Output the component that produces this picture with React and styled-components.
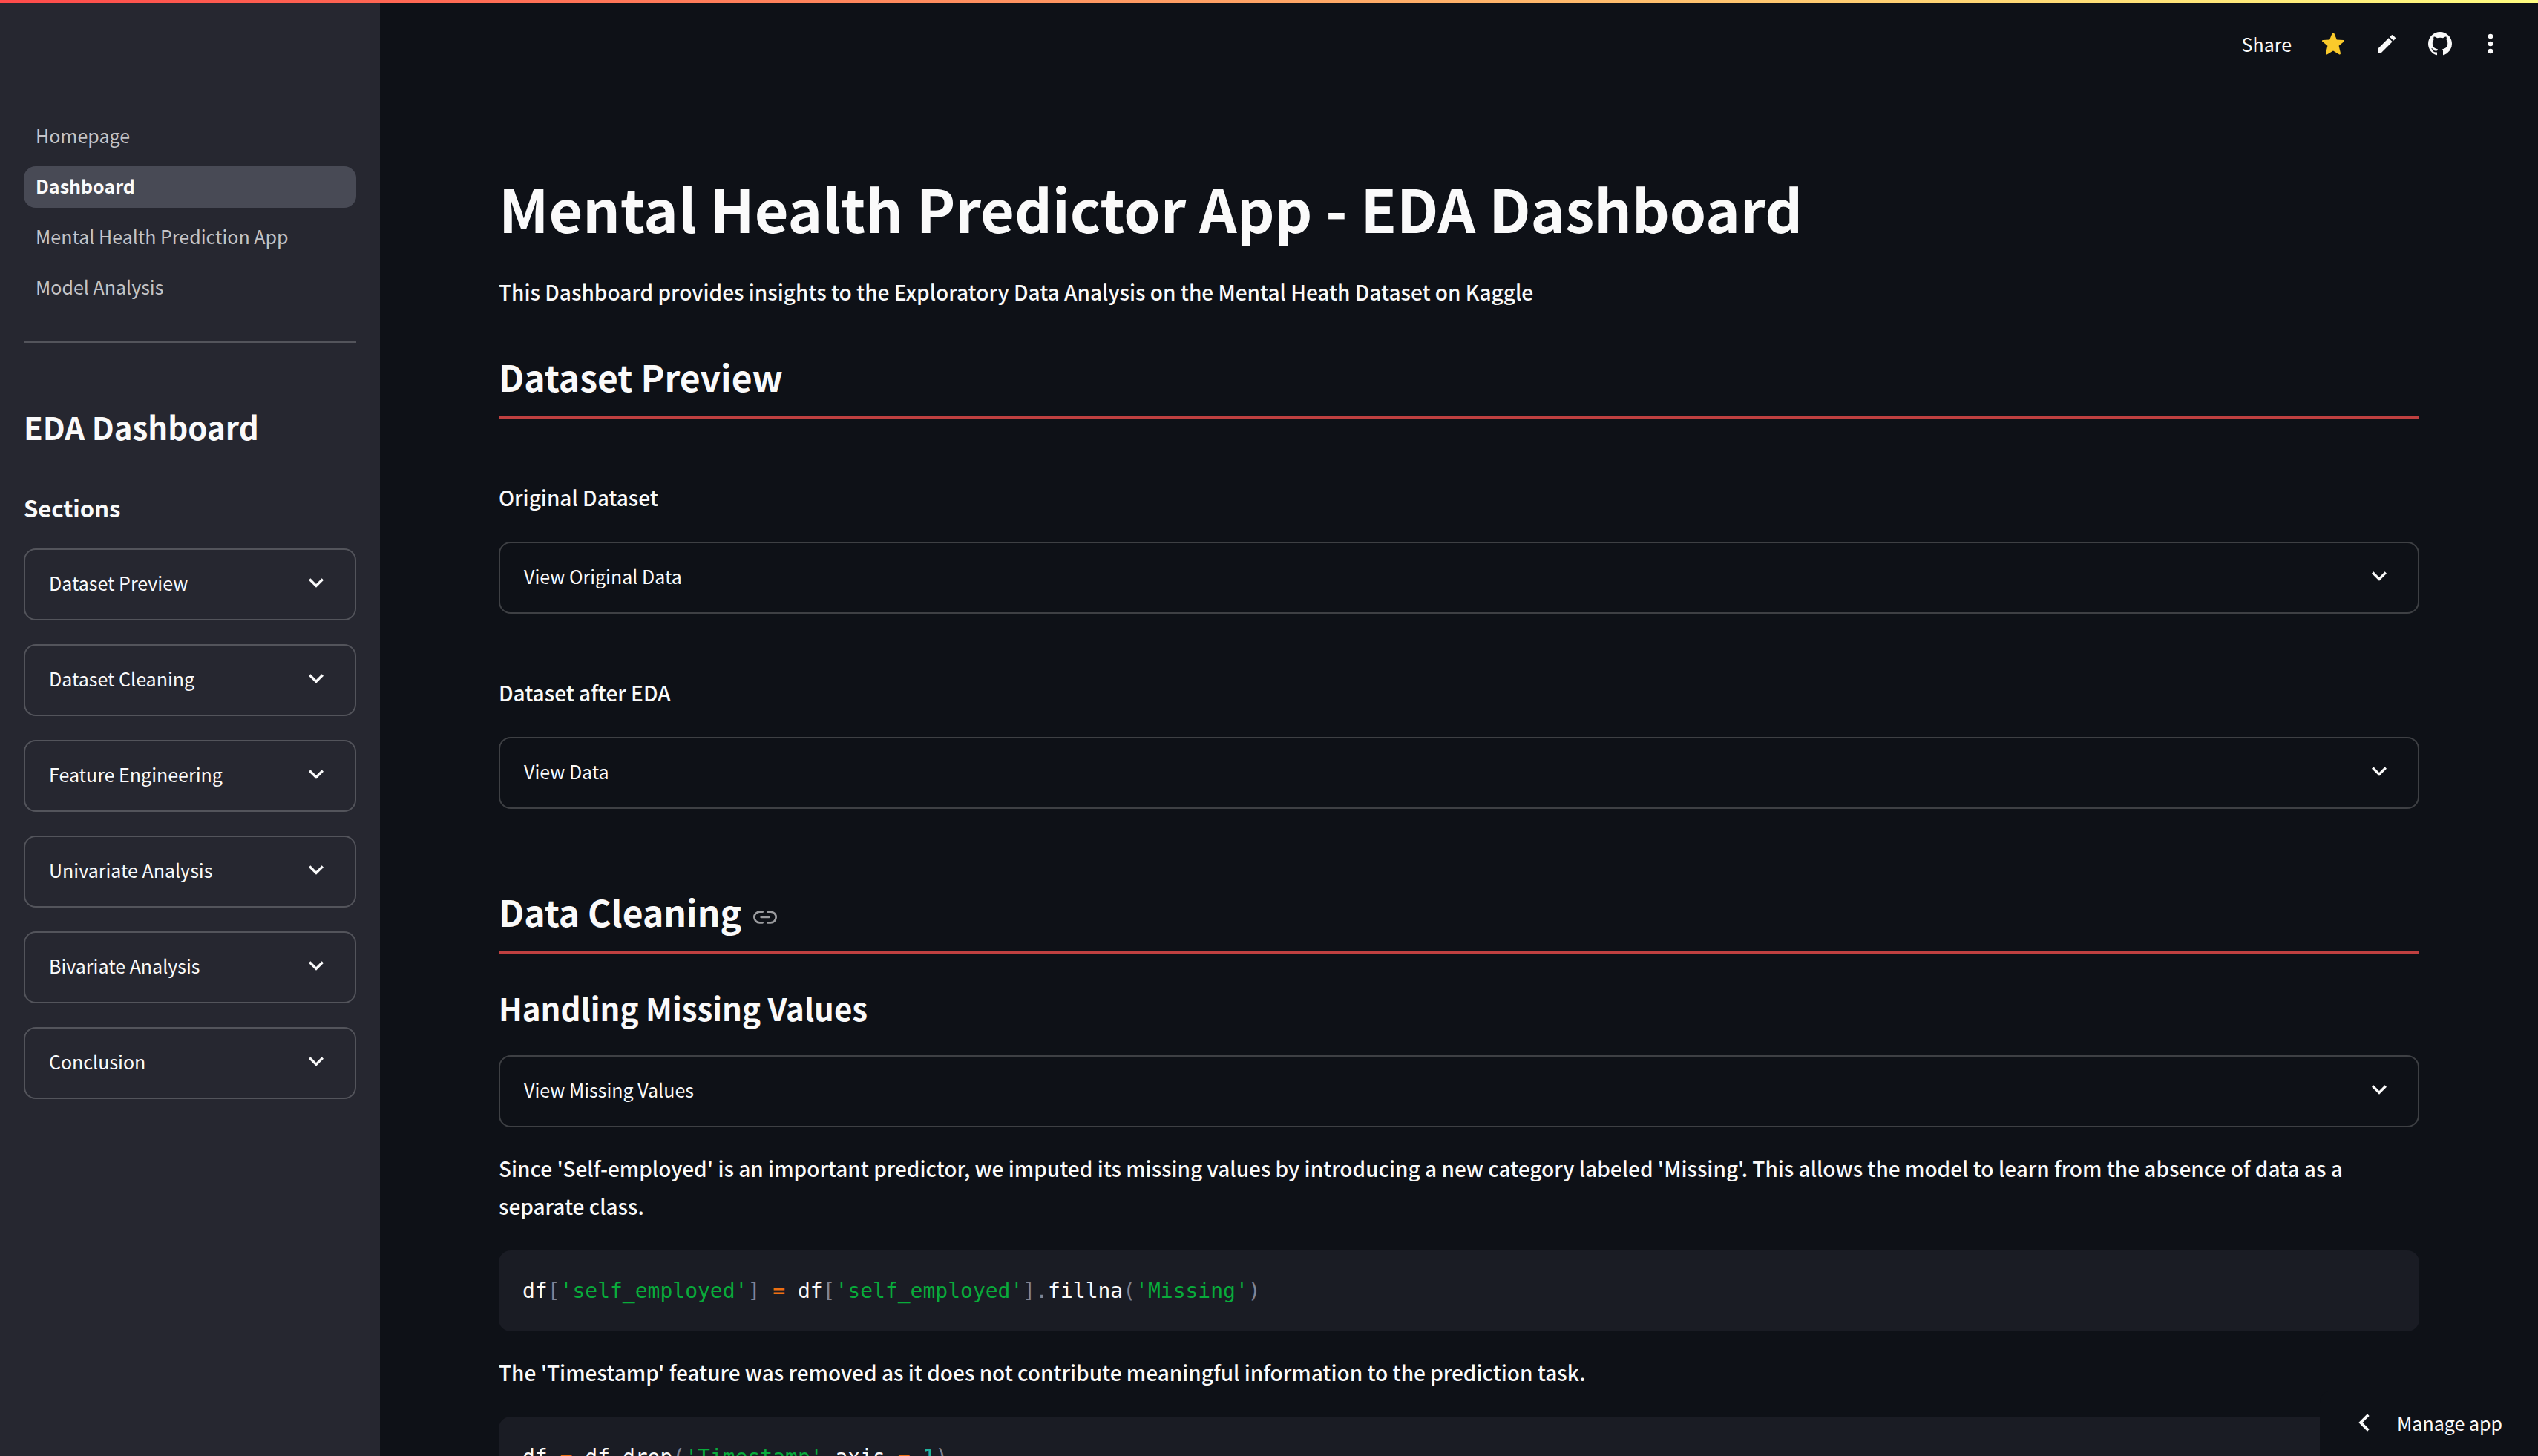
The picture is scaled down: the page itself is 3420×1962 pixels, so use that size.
import React from "react";
import styled, { createGlobalStyle } from "styled-components";

const sans = `"Noto Sans CJK SC", "Noto Sans", sans-serif`;
const mono = `"DejaVu Sans Mono", "Liberation Mono", monospace`;

const GlobalStyle = createGlobalStyle`
  *, *::before, *::after { box-sizing: border-box; }
  body {
    margin: 0;
    background: #0e1117;
    color: #fafafa;
    font-family: ${sans};
    font-size: 28px;
    line-height: 51px;
  }
  button { font: inherit; color: inherit; }
  h1, h2, h3, p, pre { margin: 0; }
`;

const Page = styled.div`
  display: flex;
  height: 100vh;
  overflow: hidden;
`;

const Decoration = styled.div`
  position: fixed;
  inset: 0 0 auto;
  height: 4px;
  background: linear-gradient(90deg, #ff4b4b, #fffd80);
`;

const Sidebar = styled.aside`
  flex: none;
  width: 512px;
  padding: 156px 32px 0;
  background: #262730;
`;

const NavList = styled.nav`
  display: flex;
  flex-direction: column;
  gap: 12px;
  padding-bottom: 44px;
  border-bottom: 2px solid #53545b;
`;

const NavLink = styled.a`
  padding: 4px 16px 8px;
  border-radius: 16px;
  font-size: 25px;
  line-height: 44px;
  text-decoration: none;
  color: ${(p) => (p.$active ? "#fafafa" : "#c3c3c6")};
  background: ${(p) => (p.$active ? "#484a55" : "transparent")};
  font-weight: ${(p) => (p.$active ? 700 : 400)};
`;

const SidebarTitle = styled.h2`
  margin-top: 84px;
  font-size: 42px;
  line-height: 58px;
  font-weight: 600;
`;

const SidebarSubtitle = styled.h3`
  margin: 58px 0 33px;
  font-size: 31px;
  line-height: 44px;
  font-weight: 600;
`;

const SectionList = styled.div`
  display: flex;
  flex-direction: column;
  gap: 32px;
`;

const ExpanderButton = styled.button`
  display: flex;
  justify-content: space-between;
  align-items: flex-start;
  width: 100%;
  padding: 24px 32px 29px;
  border: 2px solid ${(p) => (p.$sidebar ? "#53545b" : "#3e4044")};
  border-radius: 16px;
  background: transparent;
  font-size: 25px;
  line-height: 40px;
  text-align: left;
  cursor: pointer;
`;

const Content = styled.div`
  flex: 1;
  min-width: 0;
  display: flex;
  flex-direction: column;
`;

const Toolbar = styled.header`
  flex: none;
  display: flex;
  justify-content: flex-end;
  align-items: center;
  gap: 40px;
  height: 118px;
  padding-right: 52px;
`;

const ToolbarButton = styled.button`
  display: flex;
  padding: 0;
  border: 0;
  background: none;
  font-size: 25px;
  line-height: 40px;
  cursor: pointer;
`;

const Main = styled.main`
  flex: 1;
  min-height: 0;
  overflow: hidden auto;
  scrollbar-width: none;
  padding: 109px 160px 0;
`;

const Title = styled.h1`
  font-size: 79px;
  line-height: 106px;
  font-weight: 700;
`;

const Heading = styled.h2`
  display: flex;
  align-items: center;
  gap: 16px;
  margin-top: ${(p) => p.$top};
  padding-bottom: 19px;
  border-bottom: 4px solid #bf4040;
  font-size: 48px;
  line-height: 68px;
  font-weight: 600;
`;

const Subheading = styled.h3`
  margin: 44px 0 35px;
  font-size: 42px;
  line-height: 58px;
  font-weight: 600;
`;

const Anchor = styled.a`
  display: flex;
  padding-top: 16px;
  color: #9b9c9f;
`;

const Paragraph = styled.p`
  margin: ${(p) => (p.$spaced ? "81px" : "30px")} 0 34px;
  font-weight: 500;
`;

const Intro = styled(Paragraph)`
  margin: 35px 0 0;
`;

const CodeBlock = styled.pre`
  padding: 32px;
  border-radius: 16px;
  background: #1a1c24;
  font-family: ${mono};
  font-size: 28px;
  line-height: 45px;
  overflow: hidden;
`;

const Code = styled.code`
  font-family: inherit;
`;

const tokenColors = {
  punct: "#808495",
  string: "#09ab3b",
  op: "#ed6f13",
  num: "#1fb5a0",
};

const Token = styled.span`
  color: ${(p) => tokenColors[p.$kind] || "inherit"};
`;

const ManageButton = styled.button`
  position: fixed;
  right: 0;
  bottom: 0;
  display: flex;
  align-items: center;
  gap: 28px;
  padding: 21px 48px 23px 44px;
  border: 0;
  border-top-left-radius: 16px;
  background: #0e1117;
  font-size: 25px;
  line-height: 44px;
  cursor: pointer;
`;

const ChevronDown = () => (
  <svg width="40" height="40" viewBox="0 0 24 24" fill="currentColor" aria-hidden="true">
    <path d="M16.59 8.59 12 13.17 7.41 8.59 6 10l6 6 6-6z" />
  </svg>
);

const ChevronLeft = () => (
  <svg width="32" height="40" viewBox="2 0 19.2 24" fill="currentColor" aria-hidden="true">
    <path d="M15.6 6.6 14 5l-7 7 7 7 1.600-1.600L10.200 12z" />
  </svg>
);

const StarIcon = () => (
  <svg width="32" height="32" viewBox="0 0 32 32" fill="#faca2b" aria-hidden="true">
    <path d="M16 1c.7 0 1.200.4 1.500 1.200l3.300 8.300 8.900.5c1.500.1 1.800 1.200.8 2.100l-6.900 5.700 2.300 9.500c.3 1.700-.5 2.900-2 1.900L16 25.400l-7.900 4.800c-1.500 1-2.300-.2-2-1.900l2.300-9.500-6.900-5.700c-1-.9-.7-2 .8-2.100l8.900-.5 3.300-8.300C14.800 1.400 15.300 1 16 1z" />
  </svg>
);

const PencilIcon = () => (
  <svg width="32" height="32" viewBox="0 0 24 24" fill="currentColor" aria-hidden="true">
    <path d="M3 17.460v3.040c0 .28.22.5.5.5h3.040c.13 0 .26-.05.35-.15L17.810 9.940l-3.750-3.750L3.150 17.100c-.1.1-.15.22-.15.360zM20.710 7.040a.996.996 0 0 0 0-1.410l-2.340-2.340a.996.996 0 0 0-1.410 0l-1.830 1.830 3.750 3.750 1.830-1.830z" />
  </svg>
);

const GithubIcon = () => (
  <svg width="32" height="32" viewBox="0 0 16 16" fill="currentColor" aria-hidden="true">
    <path d="M8 0C3.580 0 0 3.580 0 8c0 3.540 2.290 6.530 5.470 7.590.4.070.55-.17.55-.38 0-.19-.01-.82-.01-1.490-2.010.37-2.530-.49-2.690-.94-.09-.23-.48-.94-.82-1.130-.28-.15-.68-.52-.01-.53.63-.01 1.080.58 1.230.82.72 1.210 1.870.87 2.330.66.07-.52.28-.87.51-1.070-1.780-.2-3.640-.89-3.640-3.950 0-.87.31-1.590.82-2.150-.08-.2-.36-1.020.08-2.120 0 0 .67-.21 2.200.82.64-.18 1.320-.27 2-.27s1.360.09 2 .27c1.530-1.040 2.200-.82 2.200-.82.44 1.100.16 1.920.08 2.120.51.56.82 1.270.82 2.150 0 3.070-1.870 3.750-3.650 3.950.29.25.54.73.54 1.480 0 1.070-.01 1.930-.01 2.200 0 .21.15.46.55.38A8.010 8.010 0 0 0 16 8c0-4.420-3.580-8-8-8z" />
  </svg>
);

const MoreIcon = () => (
  <svg width="24" height="40" viewBox="4.8 0 14.4 24" fill="currentColor" aria-hidden="true">
    <circle cx="12" cy="6" r="2" />
    <circle cx="12" cy="12" r="2" />
    <circle cx="12" cy="18" r="2" />
  </svg>
);

const LinkIcon = () => (
  <svg width="32" height="32" viewBox="0 0 24 24" fill="none" stroke="currentColor" strokeWidth="2" strokeLinecap="round" aria-hidden="true">
    <path d="M14.500 6.500H17.500a5.500 5.500 0 0 1 0 11h-3M9.500 17.500h-3a5.500 5.500 0 0 1 0-11h3" />
    <path d="M8 12h8" />
  </svg>
);

const pages = ["Homepage", "Dashboard", "Mental Health Prediction App", "Model Analysis"];
const sections = [
  "Dataset Preview",
  "Dataset Cleaning",
  "Feature Engineering",
  "Univariate Analysis",
  "Bivariate Analysis",
  "Conclusion",
];

const fillMissing = [
  ["", "df"], ["punct", "["], ["string", "'self_employed'"], ["punct", "]"], ["op", " = "],
  ["", "df"], ["punct", "["], ["string", "'self_employed'"], ["punct", "]."],
  ["", "fillna"], ["punct", "("], ["string", "'Missing'"], ["punct", ")"],
];
const dropTimestamp = [
  ["", "df"], ["op", " = "], ["", "df"], ["punct", "."], ["", "drop"], ["punct", "("],
  ["string", "'Timestamp'"], ["punct", ","], ["", "axis"], ["op", " = "], ["num", "1"], ["punct", ")"],
];

const Expander = ({ label, sidebar }) => (
  <ExpanderButton type="button" aria-expanded="false" $sidebar={sidebar}>
    {label}
    <ChevronDown />
  </ExpanderButton>
);

const CodeSample = ({ tokens }) => (
  <CodeBlock>
    <Code>
      {tokens.map(([kind, text], i) => (
        <Token key={i} $kind={kind}>{text}</Token>
      ))}
    </Code>
  </CodeBlock>
);

export default function App() {
  return (
    <>
      <GlobalStyle />
      <Page>
        <Sidebar>
          <NavList aria-label="Pages">
            {pages.map((name) => (
              <NavLink key={name} href="#" $active={name === "Dashboard"}>{name}</NavLink>
            ))}
          </NavList>
          <SidebarTitle>EDA Dashboard</SidebarTitle>
          <SidebarSubtitle>Sections</SidebarSubtitle>
          <SectionList>
            {sections.map((name) => <Expander key={name} label={name} sidebar />)}
          </SectionList>
        </Sidebar>
        <Content>
          <Toolbar>
            <ToolbarButton type="button">Share</ToolbarButton>
            <ToolbarButton type="button" aria-label="Favorite"><StarIcon /></ToolbarButton>
            <ToolbarButton type="button" aria-label="Edit"><PencilIcon /></ToolbarButton>
            <ToolbarButton type="button" aria-label="View source"><GithubIcon /></ToolbarButton>
            <ToolbarButton type="button" aria-label="Menu"><MoreIcon /></ToolbarButton>
          </Toolbar>
          <Main>
            <Title>Mental Health Predictor App - EDA Dashboard</Title>
            <Intro>This Dashboard provides insights to the Exploratory Data Analysis on the Mental Heath Dataset on Kaggle</Intro>
            <Heading $top="54px">Dataset Preview</Heading>
            <Paragraph $spaced>Original Dataset</Paragraph>
            <Expander label="View Original Data" />
            <Paragraph $spaced>Dataset after EDA</Paragraph>
            <Expander label="View Data" />
            <Heading $top="104px">
              Data Cleaning
              <Anchor href="#data-cleaning" aria-label="Link to heading"><LinkIcon /></Anchor>
            </Heading>
            <Subheading>Handling Missing Values</Subheading>
            <Expander label="View Missing Values" />
            <Paragraph>
              Since 'Self-employed' is an important predictor, we imputed its missing values by introducing a new
              category labeled 'Missing'. This allows the model to learn from the absence of data as a separate class.
            </Paragraph>
            <CodeSample tokens={fillMissing} />
            <Paragraph>
              The 'Timestamp' feature was removed as it does not contribute meaningful information to the prediction task.
            </Paragraph>
            <CodeSample tokens={dropTimestamp} />
          </Main>
        </Content>
      </Page>
      <Decoration />
      <ManageButton type="button">
        <ChevronLeft />
        Manage app
      </ManageButton>
    </>
  );
}
